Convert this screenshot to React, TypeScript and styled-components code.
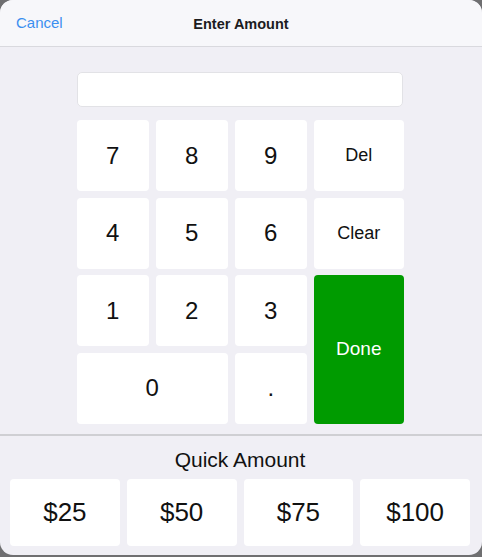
import React, { useState } from 'react';
import styled, { createGlobalStyle } from 'styled-components';

const GlobalStyle = createGlobalStyle`
  html, body {
    margin: 0;
    padding: 0;
    background: #6f6f71;
    font-family: "Liberation Sans", Arial, sans-serif;
  }
`;

const keys = ['7', '8', '9', 'Del', '4', '5', '6', 'Clear', '1', '2', '3'];
const quickAmounts = [25, 50, 75, 100];

export default function App() {
  const [value, setValue] = useState('');

  const press = (k: string) => {
    if (k === 'Del') setValue((v) => v.slice(0, -1));
    else if (k === 'Clear') setValue('');
    else setValue((v) => v + k);
  };

  return (
    <>
      <GlobalStyle />
      <Sheet>
        <Header>
          <CancelButton>Cancel</CancelButton>
          <Title>Enter Amount</Title>
        </Header>
        <Body>
          <AmountInput value={value} readOnly />
          <Keypad>
            {keys.map((k) => (
              <Key key={k} small={k.length > 1} onClick={() => press(k)}>
                {k}
              </Key>
            ))}
            <DoneKey>Done</DoneKey>
            <Key wide onClick={() => press('0')}>0</Key>
            <Key onClick={() => press('.')}>.</Key>
          </Keypad>
        </Body>
        <QuickSection>
          <QuickTitle>Quick Amount</QuickTitle>
          <QuickRow>
            {quickAmounts.map((a) => (
              <QuickButton key={a} onClick={() => setValue(String(a))}>
                ${a}
              </QuickButton>
            ))}
          </QuickRow>
        </QuickSection>
      </Sheet>
    </>
  );
}

const Sheet = styled.div`
  width: 482px;
  height: 555px;
  background: #f0eff5;
  border-radius: 13px;
  overflow: hidden;
  display: flex;
  flex-direction: column;
`;

const Header = styled.div`
  height: 46px;
  flex: none;
  background: #f7f7fa;
  border-bottom: 1px solid #d9d9de;
  display: flex;
  align-items: center;
  justify-content: center;
  position: relative;
`;

const CancelButton = styled.button`
  position: absolute;
  left: 16px;
  top: 14px;
  border: none;
  background: none;
  padding: 0;
  font-family: inherit;
  font-size: 15px;
  color: #3b8ff0;
  cursor: pointer;
`;

const Title = styled.div`
  font-size: 14.5px;
  font-weight: 700;
  color: #1c1c1e;
  padding-top: 1px;
`;

const Body = styled.div`
  padding: 25px 0 0 77px;
  height: 389px;
  box-sizing: border-box;
  border-bottom: 2px solid #cfcfd3;
`;

const AmountInput = styled.input`
  display: block;
  box-sizing: border-box;
  width: 326px;
  height: 35px;
  margin: 0 0 13px 0;
  border: 1px solid #e2e2e6;
  border-radius: 5px;
  background: #ffffff;
  font-family: inherit;
  font-size: 20px;
  padding: 0 10px;
  outline: none;
`;

const Keypad = styled.div`
  display: grid;
  grid-template-columns: 71.5px 71.5px 71.5px 89.5px;
  grid-auto-rows: 71px;
  gap: 6.5px 7.5px;
`;

const Key = styled.button<{ small?: boolean; wide?: boolean }>`
  border: none;
  border-radius: 4px;
  background: #ffffff;
  color: #111111;
  font-family: inherit;
  font-size: ${(p) => (p.small ? '18px' : '24px')};
  grid-column: ${(p) => (p.wide ? 'span 2' : 'auto')};
  cursor: pointer;
  padding: 0;
`;

const DoneKey = styled.button`
  grid-column: 4;
  grid-row: 3 / span 2;
  border: none;
  border-radius: 4px;
  background: #009b00;
  color: #ffffff;
  font-family: inherit;
  font-size: 19px;
  cursor: pointer;
`;

const QuickSection = styled.div`
  padding: 11px 12px 0 10px;
`;

const QuickTitle = styled.div`
  text-align: center;
  font-size: 21px;
  color: #111111;
  line-height: 25px;
`;

const QuickRow = styled.div`
  display: grid;
  grid-template-columns: repeat(4, 1fr);
  gap: 7px;
  margin-top: 7px;
`;

const QuickButton = styled.button`
  height: 67px;
  border: none;
  border-radius: 4px;
  background: #ffffff;
  color: #111111;
  font-family: inherit;
  font-size: 26px;
  cursor: pointer;
`;
